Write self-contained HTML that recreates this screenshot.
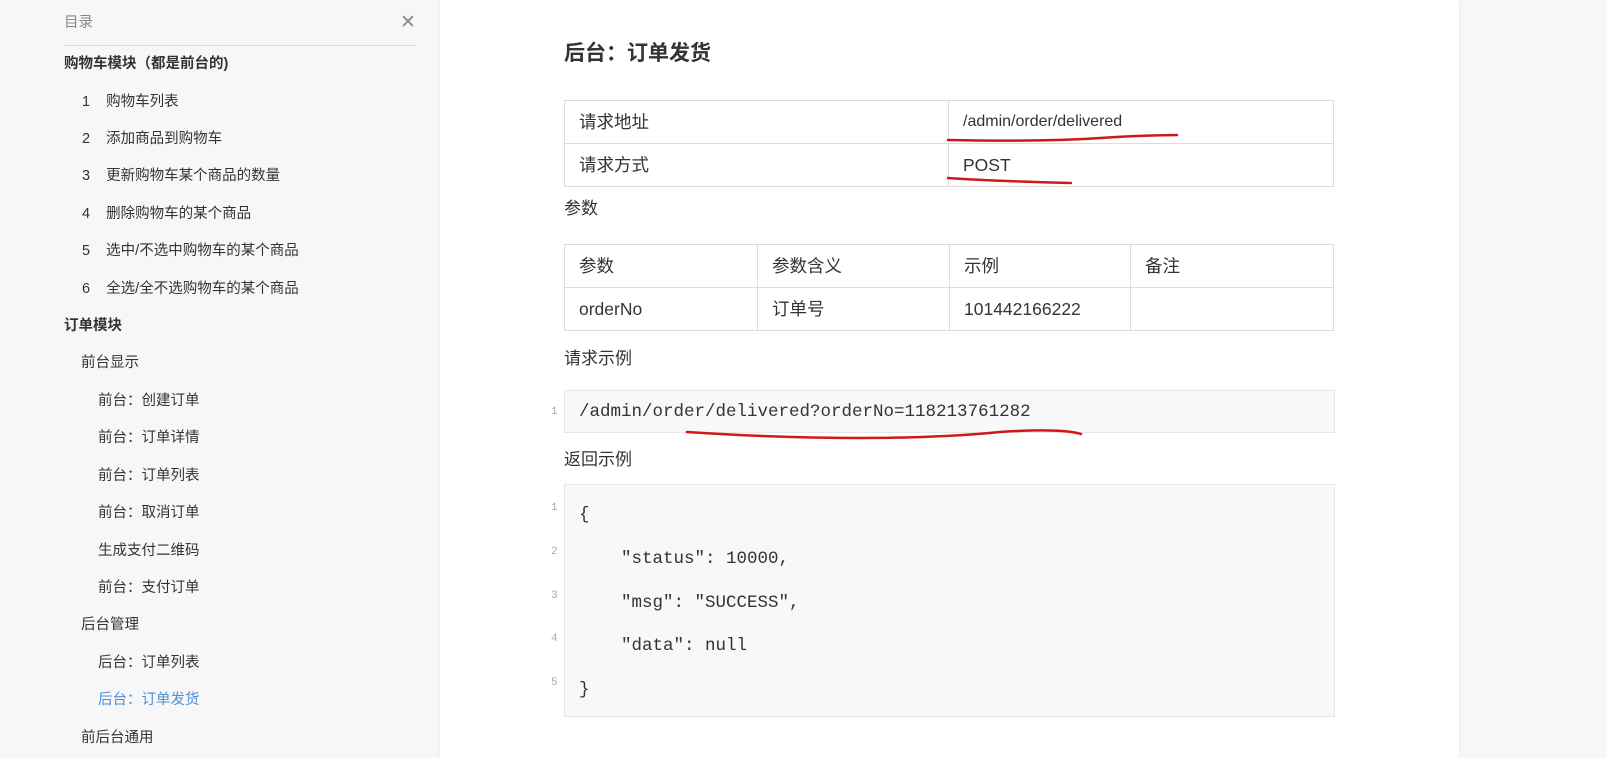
<!DOCTYPE html>
<html><head><meta charset="utf-8"><style>
*{margin:0;padding:0;box-sizing:border-box}
body{width:1606px;height:758px;overflow:hidden;background:#f7f7f7;font-family:"Liberation Sans","Noto Sans CJK SC",sans-serif;position:relative;color:#333}
.side{position:absolute;left:0;top:0;width:439px;height:758px;background:#f7f7f7}
.a{position:absolute;font-size:14.5px;color:#333;white-space:nowrap;line-height:20px}
.b{font-weight:bold}
.main{position:absolute;left:440px;top:0;width:1019px;height:758px;background:#fff;box-shadow:0 0 4px rgba(0,0,0,.06)}
.t{position:absolute;font-size:17px;color:#333;white-space:nowrap;line-height:24px}
table{position:absolute;border-collapse:collapse;left:564px;width:770px}
td{border:1px solid #dcdcdc;font-size:17.5px;padding:0 0 0 14px;color:#333;vertical-align:middle}
td span{display:inline-block;line-height:22px;vertical-align:middle}
.code{position:absolute;left:564px;width:771px;background:#f8f8f8;border:1px solid #e7e7e7;font-family:"Liberation Mono",monospace;font-size:17.5px;color:#333}
.ln{position:absolute;font-family:"Liberation Mono",monospace;font-size:11px;color:#aaa}
.cl{position:absolute;left:14px;white-space:pre;line-height:22px}
</style></head><body>
<div class="side">
<div class="a" style="left:64px;top:13px;color:#888">目录</div>
<div style="position:absolute;left:400px;top:13px;font-size:19px;color:#888;line-height:20px">✕</div>
<div style="position:absolute;left:64px;top:45px;width:352px;height:1px;background:#ddd"></div>
<div class="a b" style="left:64px;top:54px">购物车模块（都是前台的)</div>
<div class="a" style="left:82px;top:92px">1&nbsp;&nbsp;&nbsp;&nbsp;购物车列表</div>
<div class="a" style="left:82px;top:129px">2&nbsp;&nbsp;&nbsp;&nbsp;添加商品到购物车</div>
<div class="a" style="left:82px;top:166px">3&nbsp;&nbsp;&nbsp;&nbsp;更新购物车某个商品的数量</div>
<div class="a" style="left:82px;top:204px">4&nbsp;&nbsp;&nbsp;&nbsp;删除购物车的某个商品</div>
<div class="a" style="left:82px;top:241px">5&nbsp;&nbsp;&nbsp;&nbsp;选中/不选中购物车的某个商品</div>
<div class="a" style="left:82px;top:279px">6&nbsp;&nbsp;&nbsp;&nbsp;全选/全不选购物车的某个商品</div>
<div class="a b" style="left:64px;top:316px">订单模块</div>
<div class="a" style="left:81px;top:353px">前台显示</div>
<div class="a" style="left:98px;top:391px">前台：创建订单</div>
<div class="a" style="left:98px;top:428px">前台：订单详情</div>
<div class="a" style="left:98px;top:466px">前台：订单列表</div>
<div class="a" style="left:98px;top:503px">前台：取消订单</div>
<div class="a" style="left:98px;top:541px">生成支付二维码</div>
<div class="a" style="left:98px;top:578px">前台：支付订单</div>
<div class="a" style="left:81px;top:615px">后台管理</div>
<div class="a" style="left:98px;top:653px">后台：订单列表</div>
<div class="a" style="left:98px;top:690px;color:#4a90d9">后台：订单发货</div>
<div class="a" style="left:81px;top:728px">前后台通用</div>
</div>
<div class="main"></div>
<div class="t" style="left:564px;top:42px;font-size:21px;font-weight:bold">后台：订单发货</div>
<table style="top:100px"><tr style="height:43px"><td style="width:384px"><span>请求地址</span></td><td style="font-size:16px"><span>/admin/order/delivered</span></td></tr>
<tr style="height:43px"><td><span>请求方式</span></td><td><span>POST</span></td></tr></table>
<div class="t" style="left:564px;top:197px">参数</div>
<table style="top:244px"><tr style="height:43px"><td style="width:193px"><span>参数</span></td><td style="width:192px"><span>参数含义</span></td><td style="width:181px"><span>示例</span></td><td><span>备注</span></td></tr>
<tr style="height:43px"><td><span>orderNo</span></td><td><span>订单号</span></td><td><span>101442166222</span></td><td></td></tr></table>
<div class="t" style="left:564px;top:347px">请求示例</div>
<div class="ln" style="left:551px;top:406px">1</div>
<div class="code" style="top:390px;height:43px"><div class="cl" style="top:10px">/admin/order/delivered?orderNo=118213761282</div></div>
<div class="t" style="left:564px;top:448px">返回示例</div>
<div class="code" style="top:484px;height:233px">
<div class="cl" style="top:19px">{</div>
<div class="cl" style="top:63px">    "status": 10000,</div>
<div class="cl" style="top:107px">    "msg": "SUCCESS",</div>
<div class="cl" style="top:150px">    "data": null</div>
<div class="cl" style="top:194px">}</div>
</div>
<div class="ln" style="left:551px;top:502px">1</div>
<div class="ln" style="left:551px;top:546px">2</div>
<div class="ln" style="left:551px;top:590px">3</div>
<div class="ln" style="left:551px;top:633px">4</div>
<div class="ln" style="left:551px;top:677px">5</div>
<svg style="position:absolute;left:0;top:0" width="1606" height="758">
<g fill="none" stroke="#d01818" stroke-width="2.5" stroke-linecap="round">
<path d="M948 140 Q1040 142 1100 138 Q1150 135 1177 135"/>
<path d="M948 178 Q990 181 1071 183"/>
<path d="M687 432 Q780 438 860 438 Q940 438 1000 432 Q1060 428 1081 434"/>
</g></svg>
</body></html>
